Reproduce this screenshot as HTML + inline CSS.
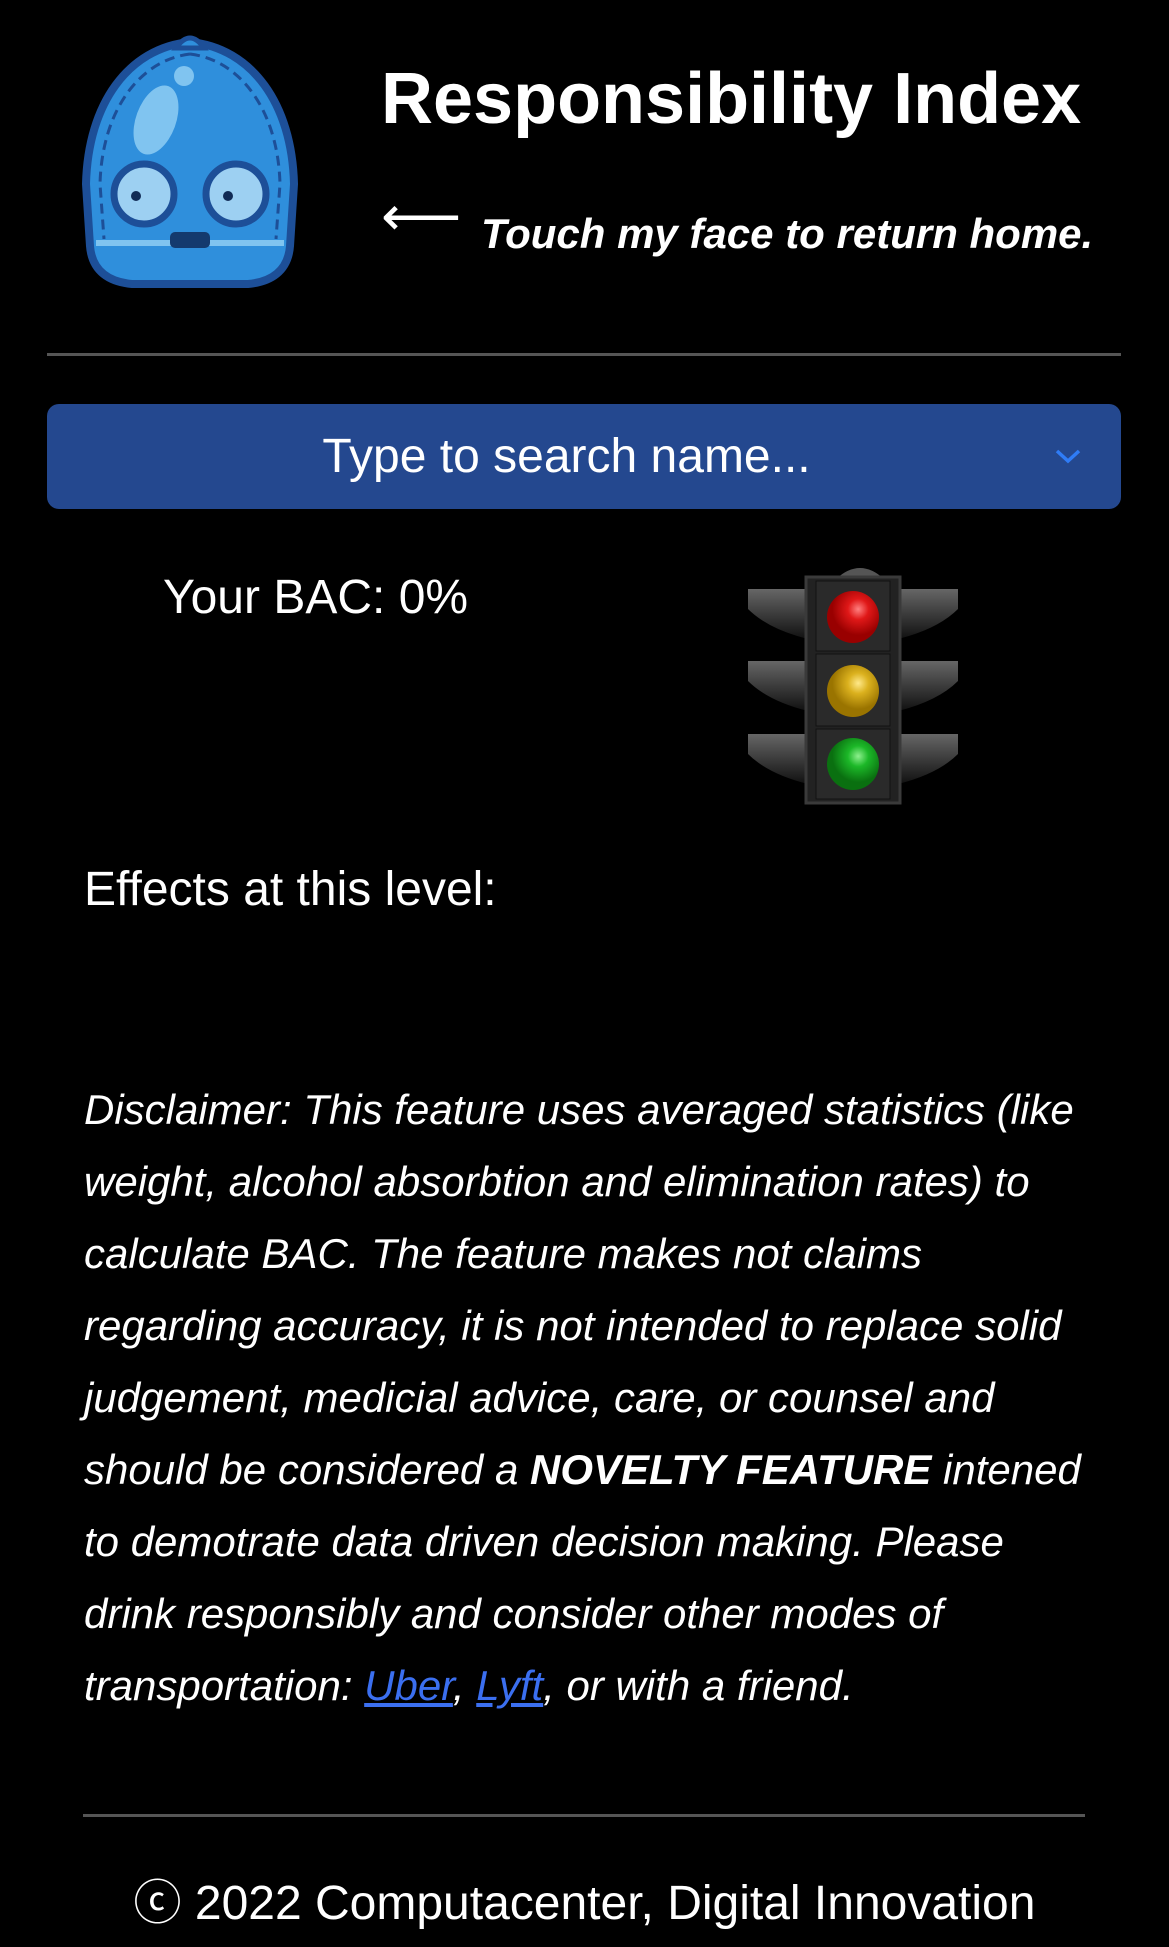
<!DOCTYPE html>
<html><head><meta charset="utf-8"><style>
body{margin:0;background:#000;width:1169px;height:1947px;overflow:hidden;font-family:"Liberation Sans",Arial,sans-serif;color:#fff;position:relative}
.a{position:absolute;white-space:nowrap}
</style></head><body>
<svg class="a" style="left:78px;top:34px" width="224" height="254" viewBox="0 0 224 254">
<path d="M112 8 C50 14 10 70 8 150 L12 212 C14 238 32 248 54 250 L170 250 C192 248 210 238 212 212 L216 150 C214 70 174 14 112 8Z" fill="#2f8fdc" stroke="#1d4f98" stroke-width="8"/>
<path d="M112 20 C62 26 24 76 22 150 L26 205" fill="none" stroke="#1d4f98" stroke-width="3" stroke-dasharray="10 6"/>
<path d="M112 20 C162 26 200 76 202 150 L198 205" fill="none" stroke="#1d4f98" stroke-width="3" stroke-dasharray="10 6"/>
<path d="M98 14 Q112 -6 126 14Z" fill="#2f8fdc" stroke="#1d4f98" stroke-width="5"/>
<ellipse cx="78" cy="86" rx="20" ry="36" fill="#80c4f0" transform="rotate(20 78 86)"/>
<circle cx="106" cy="42" r="10" fill="#80c4f0"/>
<circle cx="66" cy="160" r="30" fill="#9dd0f2" stroke="#1d4f98" stroke-width="7"/>
<circle cx="158" cy="160" r="30" fill="#9dd0f2" stroke="#1d4f98" stroke-width="7"/>
<circle cx="58" cy="162" r="5" fill="#112b55"/><circle cx="150" cy="162" r="5" fill="#112b55"/>
<rect x="18" y="206" width="188" height="6" fill="#80c4f0"/>
<rect x="92" y="198" width="40" height="16" rx="5" fill="#143a6e"/>
</svg>
<div class="a" style="left:381px;top:58px;font-size:72px;font-weight:bold">Responsibility Index</div>
<div class="a" style="left:381px;top:188px;font-size:56px;line-height:1">⟵</div>
<div class="a" style="left:481px;top:210px;font-size:42px;font-weight:bold;font-style:italic">Touch my face to return home.</div>
<div class="a" style="left:47px;top:353px;width:1074px;height:3px;background:#555"></div>
<div class="a" style="left:47px;top:404px;width:1074px;height:105px;background:#24488f;border-radius:12px"></div>
<div class="a" style="left:0;width:1133px;text-align:center;top:429px;font-size:48px">Type to search name...</div>
<svg class="a" style="left:1054px;top:448px" width="28" height="16"><path d="M3 3 L14 13 L25 3" fill="none" stroke="#2f7cf6" stroke-width="3.5"/></svg>
<div class="a" style="left:163px;top:570px;font-size:48px">Your BAC: 0%</div>
<svg class="a" style="left:748px;top:559px" width="210" height="246" viewBox="0 0 210 246">
<defs><radialGradient id="r" cx=".6" cy=".35"><stop offset="0" stop-color="#ff8080"/><stop offset=".4" stop-color="#e01818"/><stop offset="1" stop-color="#900"/></radialGradient>
<radialGradient id="y" cx=".6" cy=".35"><stop offset="0" stop-color="#ffe98a"/><stop offset=".4" stop-color="#dbb11e"/><stop offset="1" stop-color="#9a7400"/></radialGradient>
<radialGradient id="g" cx=".6" cy=".35"><stop offset="0" stop-color="#8ef08e"/><stop offset=".4" stop-color="#1cb828"/><stop offset="1" stop-color="#0a7010"/></radialGradient>
<linearGradient id="w" x1="0" y1="0" x2="0" y2="1"><stop offset="0" stop-color="#666"/><stop offset="1" stop-color="#111"/></linearGradient></defs>
<g fill="url(#w)"><path d="M0 30 H60 V80 Q20 70 0 50Z"/><path d="M210 30 H150 V80 Q190 70 210 50Z"/>
<path d="M0 102 H60 V152 Q20 142 0 122Z"/><path d="M210 102 H150 V152 Q190 142 210 122Z"/>
<path d="M0 175 H60 V225 Q20 215 0 195Z"/><path d="M210 175 H150 V225 Q190 215 210 195Z"/></g>
<path d="M88 20 Q112 -2 136 20Z" fill="#555"/>
<rect x="58" y="18" width="94" height="226" fill="#222" stroke="#3a3a3a" stroke-width="3"/>
<rect x="68" y="22" width="74" height="70" fill="#2a2a2a" stroke="#111"/>
<rect x="68" y="95" width="74" height="72" fill="#2a2a2a" stroke="#111"/>
<rect x="68" y="170" width="74" height="70" fill="#2a2a2a" stroke="#111"/>
<circle cx="105" cy="58" r="26" fill="url(#r)"/><circle cx="105" cy="132" r="26" fill="url(#y)"/><circle cx="105" cy="205" r="26" fill="url(#g)"/>
</svg>
<div class="a" style="left:84px;top:862px;font-size:48px">Effects at this level:</div>
<div class="a" style="left:84px;top:1074px;font-size:42px;font-style:italic;line-height:72px">Disclaimer: This feature uses averaged statistics (like<br>weight, alcohol absorbtion and elimination rates) to<br>calculate BAC. The feature makes not claims<br>regarding accuracy, it is not intended to replace solid<br>judgement, medicial advice, care, or counsel and<br>should be considered a <b>NOVELTY FEATURE</b> intened<br>to demotrate data driven decision making. Please<br>drink responsibly and consider other modes of<br>transportation: <span style="color:#3b6ff0;text-decoration:underline">Uber</span>, <span style="color:#3b6ff0;text-decoration:underline">Lyft</span>, or with a friend.</div>
<div class="a" style="left:83px;top:1814px;width:1002px;height:3px;background:#555"></div>
<div class="a" style="left:0;width:1169px;text-align:center;top:1863px;font-size:48px">ⓒ 2022 Computacenter, Digital Innovation</div>
</body></html>
